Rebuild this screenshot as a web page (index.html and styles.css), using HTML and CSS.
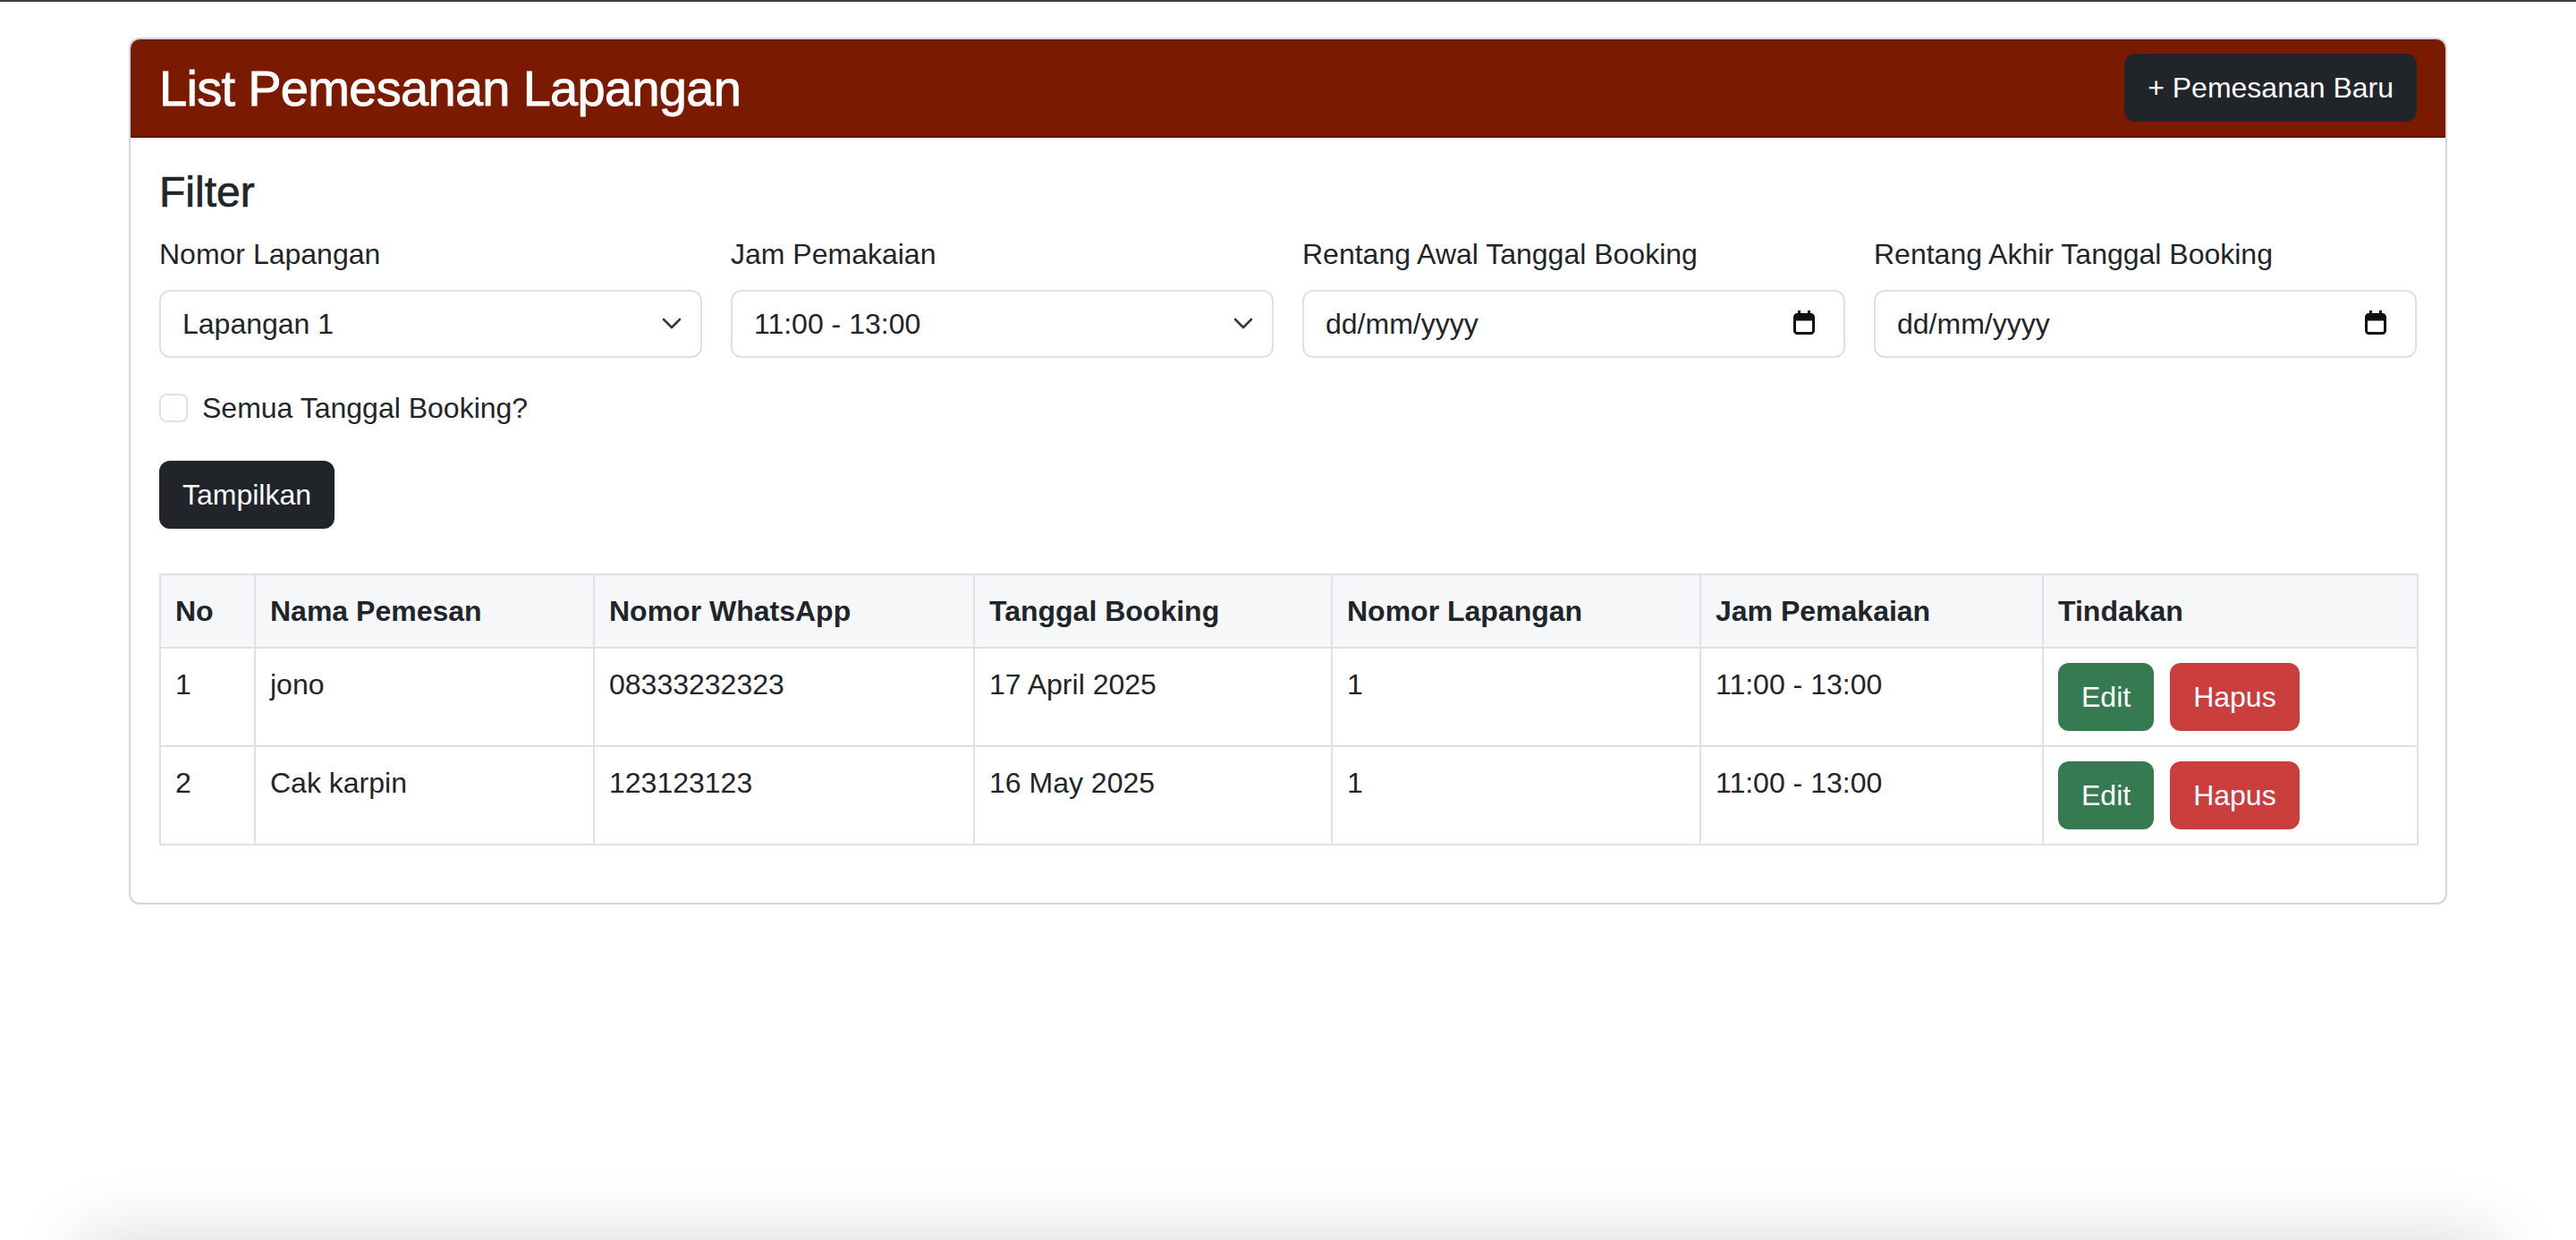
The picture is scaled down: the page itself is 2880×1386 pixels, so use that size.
FILE: index.html
```html
<!DOCTYPE html>
<html lang="id">
<head>
<meta charset="utf-8">
<title>List Pemesanan Lapangan</title>
<link rel="stylesheet" href="styles.css">
</head>
<body>
<div class="container">
  <div class="card">
    <div class="card-header">
      <h3 class="card-title">List Pemesanan Lapangan</h3>
      <button class="btn btn-dark">+ Pemesanan Baru</button>
    </div>
    <div class="card-body">
      <h4 class="filter-title">Filter</h4>
      <div class="filter-row">
        <div class="field">
          <label class="form-label">Nomor Lapangan</label>
          <div class="form-control select">
            <span>Lapangan 1</span>
            <svg class="chevron" viewBox="0 0 16 12" width="32" height="24"><path d="M3.5 3.5l4.5 4.5 4.5-4.5" fill="none" stroke="#343a40" stroke-width="1.3" stroke-linecap="round" stroke-linejoin="round"/></svg>
          </div>
        </div>
        <div class="field">
          <label class="form-label">Jam Pemakaian</label>
          <div class="form-control select">
            <span>11:00 - 13:00</span>
            <svg class="chevron" viewBox="0 0 16 12" width="32" height="24"><path d="M3.5 3.5l4.5 4.5 4.5-4.5" fill="none" stroke="#343a40" stroke-width="1.3" stroke-linecap="round" stroke-linejoin="round"/></svg>
          </div>
        </div>
        <div class="field">
          <label class="form-label">Rentang Awal Tanggal Booking</label>
          <div class="form-control date">
            <span>dd/mm/yyyy</span>
            <svg class="cal" viewBox="0 0 24 27" width="24" height="27"><rect x="1.5" y="4.5" width="21" height="21" rx="3" fill="none" stroke="#111" stroke-width="3"/><rect x="1.5" y="4.5" width="21" height="7" rx="2" fill="#111"/><rect x="5" y="0" width="3" height="6" fill="#111"/><rect x="16" y="0" width="3" height="6" fill="#111"/></svg>
          </div>
        </div>
        <div class="field">
          <label class="form-label">Rentang Akhir Tanggal Booking</label>
          <div class="form-control date">
            <span>dd/mm/yyyy</span>
            <svg class="cal" viewBox="0 0 24 27" width="24" height="27"><rect x="1.5" y="4.5" width="21" height="21" rx="3" fill="none" stroke="#111" stroke-width="3"/><rect x="1.5" y="4.5" width="21" height="7" rx="2" fill="#111"/><rect x="5" y="0" width="3" height="6" fill="#111"/><rect x="16" y="0" width="3" height="6" fill="#111"/></svg>
          </div>
        </div>
      </div>
      <div class="form-check">
        <span class="check-box"></span>
        <label class="check-label">Semua Tanggal Booking?</label>
      </div>
      <button class="btn btn-dark btn-show">Tampilkan</button>
      <table class="table">
        <colgroup>
          <col class="c-no"><col class="c-nama"><col class="c-wa"><col class="c-tgl"><col class="c-lap"><col class="c-jam"><col class="c-act">
        </colgroup>
        <thead>
          <tr>
            <th>No</th><th>Nama Pemesan</th><th>Nomor WhatsApp</th><th>Tanggal Booking</th><th>Nomor Lapangan</th><th>Jam Pemakaian</th><th>Tindakan</th>
          </tr>
        </thead>
        <tbody>
          <tr>
            <td>1</td><td>jono</td><td>08333232323</td><td>17 April 2025</td><td>1</td><td>11:00 - 13:00</td>
            <td><div class="actions"><button class="btn btn-success">Edit</button><button class="btn btn-danger">Hapus</button></div></td>
          </tr>
          <tr>
            <td>2</td><td>Cak karpin</td><td>123123123</td><td>16 May 2025</td><td>1</td><td>11:00 - 13:00</td>
            <td><div class="actions"><button class="btn btn-success">Edit</button><button class="btn btn-danger">Hapus</button></div></td>
          </tr>
        </tbody>
      </table>
    </div>
  </div>
</div>
<div class="bottom-shade"></div>
</body>
</html>
```
FILE: styles.css
```css
* { box-sizing: border-box; }
html, body { height: 100%; }
body {
  margin: 0;
  border-top: 2px solid #3b3e42;
  background: #fff;
  color: #212529;
  font-family: "Liberation Sans", Arial, sans-serif;
  font-size: 32px;
  line-height: 48px;
  overflow: hidden;
}
.container {
  width: 2592px;
  margin: 0 auto;
  padding-top: 40px;
}
.card {
  border: 2px solid #d6d6d6;
  border-radius: 12px;
  overflow: hidden;
  background: #fff;
}
.card-header {
  display: flex;
  justify-content: space-between;
  align-items: center;
  padding: 16px 32px;
  background: #7a1a00;
  border-bottom: 2px solid #661600;
}
.card-title {
  margin: 0;
  color: #fff;
  font-size: 56px;
  line-height: 67px;
  font-weight: 400;
  letter-spacing: -0.7px;
  -webkit-text-stroke: 0.9px #fff;
}
.btn {
  font-family: inherit;
  font-size: 32px;
  line-height: 48px;
  padding: 12px 24px;
  border: 2px solid transparent;
  border-radius: 12px;
  color: #fff;
  cursor: pointer;
}
.btn-dark { background: #212529; border-color: #212529; }
.btn-success { background: #357a50; border-color: #357a50; }
.btn-danger { background: #cb3e3e; border-color: #cb3e3e; }
.card-body { padding: 32px; }
.filter-title {
  margin: 0 0 16px;
  font-size: 48px;
  line-height: 58px;
  font-weight: 400;
  -webkit-text-stroke: 0.7px #212529;
}
.filter-row {
  display: grid;
  grid-template-columns: repeat(4, 1fr);
  column-gap: 32px;
}
.form-label {
  display: block;
  margin-bottom: 16px;
}
.form-control {
  display: flex;
  align-items: center;
  justify-content: space-between;
  height: 76px;
  padding: 12px 24px;
  border: 2px solid #dee2e6;
  border-radius: 12px;
  background: #fff;
  color: #212529;
}
.form-control.date { padding-right: 32px; }
.chevron { margin-right: -8px; }
.cal { margin-top: -4px; }
.form-check {
  display: flex;
  align-items: center;
  margin-top: 32px;
  margin-bottom: 4px;
  min-height: 48px;
}
.check-box {
  width: 32px;
  height: 32px;
  border: 2px solid #dee2e6;
  border-radius: 8px;
  margin-right: 16px;
  background: #fff;
}
.btn-show { margin-top: 35px; display: block; }
.table {
  width: 100%;
  margin-top: 50px;
  margin-bottom: 32px;
  border-collapse: collapse;
  table-layout: fixed;
}
.table th, .table td {
  border: 2px solid #dee2e6;
  padding: 16px;
  text-align: left;
  vertical-align: top;
}
.table th {
  background: #f6f7f9;
  font-weight: 700;
}
.c-no { width: 106px; }
.c-nama { width: 379px; }
.c-wa { width: 425px; }
.c-tgl { width: 400px; }
.c-lap { width: 412px; }
.c-jam { width: 383px; }
.c-act { width: 419px; }
.actions { display: flex; gap: 18px; }
.bottom-shade {
  position: fixed;
  left: 90px;
  right: 90px;
  bottom: -120px;
  height: 120px;
  box-shadow: 0 0 80px 0 rgba(0, 0, 0, 0.16);
  pointer-events: none;
}
```
